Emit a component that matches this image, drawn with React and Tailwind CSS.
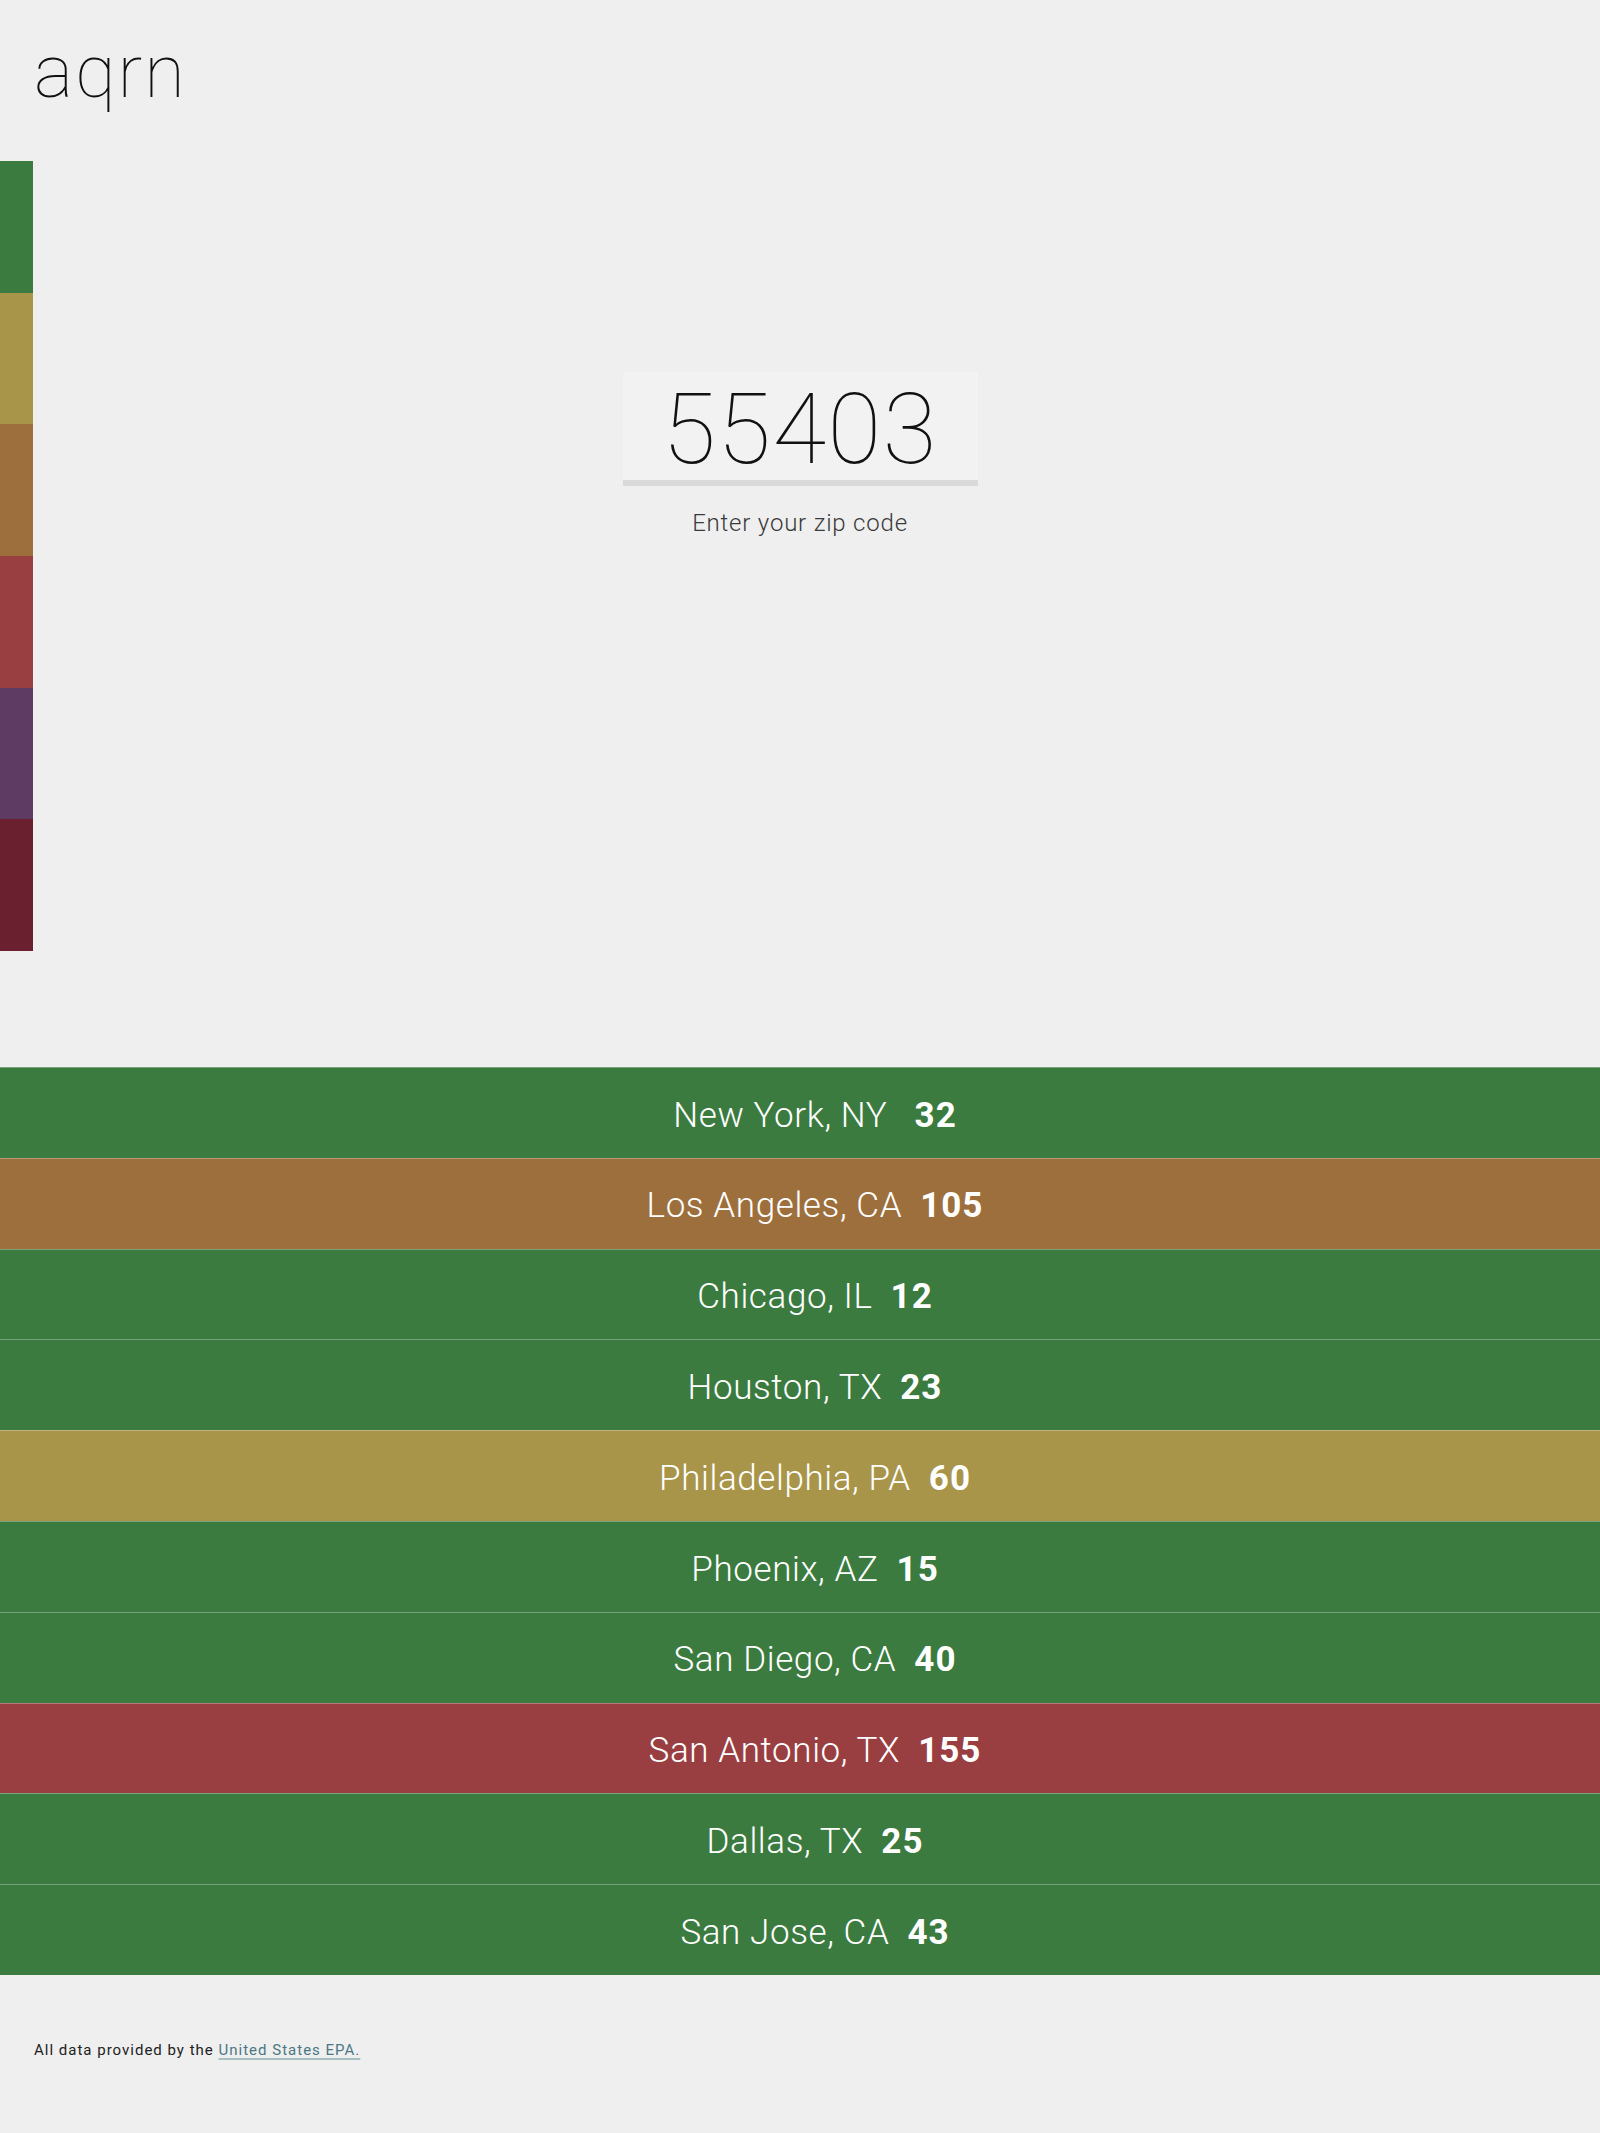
import React from "react";

const cities = [
  { name: "New York, NY\u00a0", aqi: 32 },
  { name: "Los Angeles, CA", aqi: 105 },
  { name: "Chicago, IL", aqi: 12 },
  { name: "Houston, TX", aqi: 23 },
  { name: "Philadelphia, PA", aqi: 60 },
  { name: "Phoenix, AZ", aqi: 15 },
  { name: "San Diego, CA", aqi: 40 },
  { name: "San Antonio, TX", aqi: 155 },
  { name: "Dallas, TX", aqi: 25 },
  { name: "San Jose, CA", aqi: 43 },
];

// AQI bands, same order as the legend bar
const levels = [
  "bg-[#3b7b40]",
  "bg-[#a9954a]",
  "bg-[#9d6f3d]",
  "bg-[#9a3f41]",
  "bg-[#5e3b63]",
  "bg-[#6b202f]",
];

function levelFor(aqi) {
  if (aqi <= 50) return levels[0];
  if (aqi <= 100) return levels[1];
  if (aqi <= 150) return levels[2];
  if (aqi <= 200) return levels[3];
  if (aqi <= 300) return levels[4];
  return levels[5];
}

export default function App() {
  return (
    <div className="min-h-screen bg-[#efefef] font-[Roboto,sans-serif] text-[#111] pt-[35px]">
      {/* logo */}
      <h1 className="pl-[34px] text-[74px] leading-none font-['Roboto_Thin',Roboto,sans-serif] font-thin tracking-[2px]">
        aqrn
      </h1>

      {/* legend + zip input */}
      <section className="grid grid-cols-[33px_1fr_33px] mt-[52px]">
        <div className="flex flex-col h-[790px]">
          {levels.map((c) => (
            <div key={c} className={`flex-1 ${c}`} />
          ))}
        </div>

        <div className="flex flex-col items-center pt-[211px]">
          <input
            type="text"
            value="55403"
            readOnly
            className="w-[355px] h-[114px] pt-[6px] bg-[#f2f2f2] border-b-[6px] border-[#d9d9d9] text-center text-[98px] font-['Roboto_Thin',Roboto,sans-serif] font-thin tracking-[1.5px] text-[#111] outline-none"
          />
          <label className="mt-[22px] text-[24px] font-['Roboto_Light',Roboto,sans-serif] font-light leading-[30px] tracking-[0.8px] text-[#3a3a3a]">
            Enter your zip code
          </label>
        </div>
        <div />
      </section>

      {/* city list */}
      <ul className="mt-[116px]">
        {cities.map((c) => (
          <li
            key={c.name}
            className={`flex items-center justify-center h-[90.8px] pt-[6px] pl-[30px] border-t border-white/30 text-white ${levelFor(c.aqi)}`}
          >
            <span className="text-[35px] font-['Roboto_Light',Roboto,sans-serif] font-light tracking-[0.6px] whitespace-pre">
              {c.name}
            </span>
            <span className="ml-[18px] text-[35px] font-bold tracking-[1px]">{c.aqi}</span>
          </li>
        ))}
      </ul>

      {/* footer */}
      <footer className="pl-[34px] pt-[65px] pb-[60px] text-[15px] leading-[20px] tracking-[1px] text-[#222]">
        All data provided by the{" "}
        <a
          href="#"
          className="text-[#4a7884] underline decoration-2 decoration-[#a8bfc4] underline-offset-[3px]"
        >
          United States EPA.
        </a>
      </footer>
    </div>
  );
}
